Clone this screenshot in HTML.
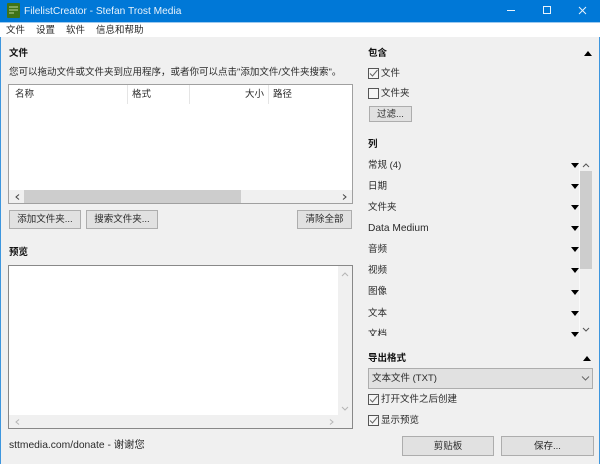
<!DOCTYPE html>
<html><head><meta charset="utf-8">
<style>
html,body{margin:0;padding:0}
body{width:600px;height:464px;position:relative;overflow:hidden;background:#f0f0f0}
#w{position:absolute;left:0;top:0;width:600px;height:464px;overflow:hidden;background:#f0f0f0;filter:blur(.35px);font:9.5px/12px "Liberation Sans","Noto Sans CJK SC",sans-serif;color:#2a2a2a}
.a{position:absolute;white-space:nowrap}
.b{font-weight:bold;color:#111}
.btn{position:absolute;box-sizing:border-box;background:#e1e1e1;border:1px solid #adadad;text-align:center;color:#2a2a2a}
.box{position:absolute;box-sizing:border-box;background:#fff;border:1px solid #a0a0a0}
.cb{position:absolute;box-sizing:border-box;width:11px;height:11px;background:#f5f5f5;border:1px solid #555}
.tri{position:absolute;left:571px;width:0;height:0;border-left:4px solid transparent;border-right:4px solid transparent;border-top:5px solid #000}
.up{position:absolute;width:0;height:0;border-left:4px solid transparent;border-right:4px solid transparent;border-bottom:5px solid #000}
svg{position:absolute;overflow:visible}
</style></head><body><div id="w">
<div class="a" style="left:0;top:0;width:600px;height:22px;background:#0078d7"></div>
<div class="a" style="left:0;top:22px;width:600px;height:1px;background:#9cc9ef"></div>
<div class="a" style="left:0;top:23px;width:600px;height:14px;background:#fff"></div>
<div class="a" style="left:0;top:37px;width:1px;height:427px;background:#3d96de"></div>
<div class="a" style="left:599px;top:37px;width:1px;height:427px;background:#3d96de"></div>
<svg style="left:7px;top:3px" width="13" height="15"><rect width="13" height="15" rx="1" fill="#3f7318"/><path d="M2 4h9M2 7h9M2 10h5" stroke="#bcd49c" fill="none"/></svg>
<div class="a" style="left:24px;top:4px;font-size:10.2px;line-height:14px;color:#e8f3fc;padding-top:1px">FilelistCreator - Stefan Trost Media</div>
<svg style="left:507px;top:5px" width="80" height="12"><path d="M0 5.500H8M36.500 1.500h7v7h-7zM72 2l7 7M79 2l-7 7" stroke="#e8f3fc" fill="none"/></svg>
<div class="a" style="left:6px;top:25px">文件</div>
<div class="a" style="left:36px;top:25px">设置</div>
<div class="a" style="left:66px;top:25px">软件</div>
<div class="a" style="left:96px;top:25px">信息和帮助</div>

<div class="a b" style="left:9px;top:48px">文件</div>
<div class="a" style="left:9px;top:67px">您可以拖动文件或文件夹到应用程序&#xFF0C;或者你可以点击"添加文件/文件夹搜索"。</div>
<div class="box" style="left:8px;top:84px;width:345px;height:120px"></div>
<div class="a" style="left:15px;top:89px">名称</div>
<div class="a" style="left:132px;top:89px">格式</div>
<div class="a" style="left:245px;top:89px">大小</div>
<div class="a" style="left:273px;top:89px">路径</div>
<div class="a" style="left:127px;top:85px;width:1px;height:19px;background:#e5e5e5"></div>
<div class="a" style="left:189px;top:85px;width:1px;height:19px;background:#e5e5e5"></div>
<div class="a" style="left:268px;top:85px;width:1px;height:19px;background:#e5e5e5"></div>
<div class="a" style="left:9px;top:190px;width:343px;height:13px;background:#f0f0f0"></div>
<div class="a" style="left:24px;top:190px;width:217px;height:13px;background:#cdcdcd"></div>
<svg style="left:15px;top:194px" width="5" height="6"><path d="M4 .5L1 3l3 2.500" stroke="#444" fill="none"/></svg>
<svg style="left:342px;top:194px" width="5" height="6"><path d="M1 .5L4 3 1 5.500" stroke="#444" fill="none"/></svg>
<div class="btn" style="left:9px;top:210px;width:72px;height:19px;line-height:18px">添加文件夹...</div>
<div class="btn" style="left:86px;top:210px;width:72px;height:19px;line-height:18px">搜索文件夹...</div>
<div class="btn" style="left:297px;top:210px;width:55px;height:19px;line-height:18px">清除全部</div>

<div class="a b" style="left:9px;top:247px">预览</div>
<div class="box" style="left:8px;top:265px;width:345px;height:164px;border-color:#888"></div>
<div class="a" style="left:338px;top:266px;width:14px;height:162px;background:#f0f0f0"></div>
<div class="a" style="left:9px;top:415px;width:343px;height:13px;background:#f0f0f0"></div>
<svg style="left:341px;top:272px" width="8" height="5"><path d="M1 4l3-3 3 3" stroke="#b5b5b5" fill="none"/></svg>
<svg style="left:341px;top:406px" width="8" height="5"><path d="M1 1l3 3 3-3" stroke="#b5b5b5" fill="none"/></svg>
<svg style="left:15px;top:419px" width="5" height="6"><path d="M4 .5L1 3l3 2.500" stroke="#b5b5b5" fill="none"/></svg>
<svg style="left:329px;top:419px" width="5" height="6"><path d="M1 .5L4 3 1 5.500" stroke="#b5b5b5" fill="none"/></svg>
<div class="a" style="left:9px;top:440px;font-size:10.3px">sttmedia.com/donate - 谢谢您</div>

<div class="a b" style="left:368px;top:48px">包含</div>
<div class="up" style="left:584px;top:51px"></div>
<div class="cb" style="left:368px;top:68px"></div>
<svg style="left:368px;top:68px" width="11" height="11"><path d="M2 5.500l2.500 2.500 5-6" stroke="#666" fill="none"/></svg>
<div class="a" style="left:381px;top:68px">文件</div>
<div class="cb" style="left:368px;top:88px"></div>
<div class="a" style="left:381px;top:88px">文件夹</div>
<div class="btn" style="left:369px;top:106px;width:43px;height:16px;line-height:15px">过滤...</div>

<div class="a b" style="left:368px;top:139px">列</div>
<div class="a" style="left:368px;top:160px">常规 (4)</div>
<div class="a" style="left:368px;top:181px">日期</div>
<div class="a" style="left:368px;top:202px">文件夹</div>
<div class="a" style="left:368px;top:223px;font-size:10.2px">Data Medium</div>
<div class="a" style="left:368px;top:244px">音频</div>
<div class="a" style="left:368px;top:265px">视频</div>
<div class="a" style="left:368px;top:286px">图像</div>
<div class="a" style="left:368px;top:308px">文本</div>
<div class="a" style="left:368px;top:328px;width:100px;height:8px;overflow:hidden"><div style="position:absolute;left:0;top:1px">文档</div></div>
<div class="tri" style="top:163px"></div>
<div class="tri" style="top:184px"></div>
<div class="tri" style="top:205px"></div>
<div class="tri" style="top:226px"></div>
<div class="tri" style="top:247px"></div>
<div class="tri" style="top:268px"></div>
<div class="tri" style="top:290px"></div>
<div class="tri" style="top:311px"></div>
<div class="tri" style="top:332px"></div>
<div class="a" style="left:579px;top:160px;width:1px;height:176px;background:#fafafa"></div>
<div class="a" style="left:580px;top:171px;width:12px;height:98px;background:#cdcdcd"></div>
<svg style="left:582px;top:163px" width="8" height="5"><path d="M1 4l3-3 3 3" stroke="#555" fill="none"/></svg>
<svg style="left:582px;top:327px" width="8" height="5"><path d="M1 1l3 3 3-3" stroke="#555" fill="none"/></svg>

<div class="a b" style="left:368px;top:353px">导出格式</div>
<div class="up" style="left:583px;top:356px"></div>
<div class="btn" style="left:368px;top:368px;width:225px;height:21px;line-height:20px;text-align:left;padding-left:3px">文本文件 (TXT)</div>
<svg style="left:581px;top:376px" width="9" height="5"><path d="M1 .5l3.500 3.500L8 .5" stroke="#666" fill="none"/></svg>
<div class="cb" style="left:368px;top:394px"></div>
<svg style="left:368px;top:394px" width="11" height="11"><path d="M2 5.500l2.500 2.500 5-6" stroke="#666" fill="none"/></svg>
<div class="a" style="left:381px;top:394px">打开文件之后创建</div>
<div class="cb" style="left:368px;top:415px"></div>
<svg style="left:368px;top:415px" width="11" height="11"><path d="M2 5.500l2.500 2.500 5-6" stroke="#666" fill="none"/></svg>
<div class="a" style="left:381px;top:415px">显示预览</div>
<div class="btn" style="left:402px;top:436px;width:92px;height:20px;line-height:19px">剪贴板</div>
<div class="btn" style="left:501px;top:436px;width:93px;height:20px;line-height:19px">保存...</div>
</div></body></html>
